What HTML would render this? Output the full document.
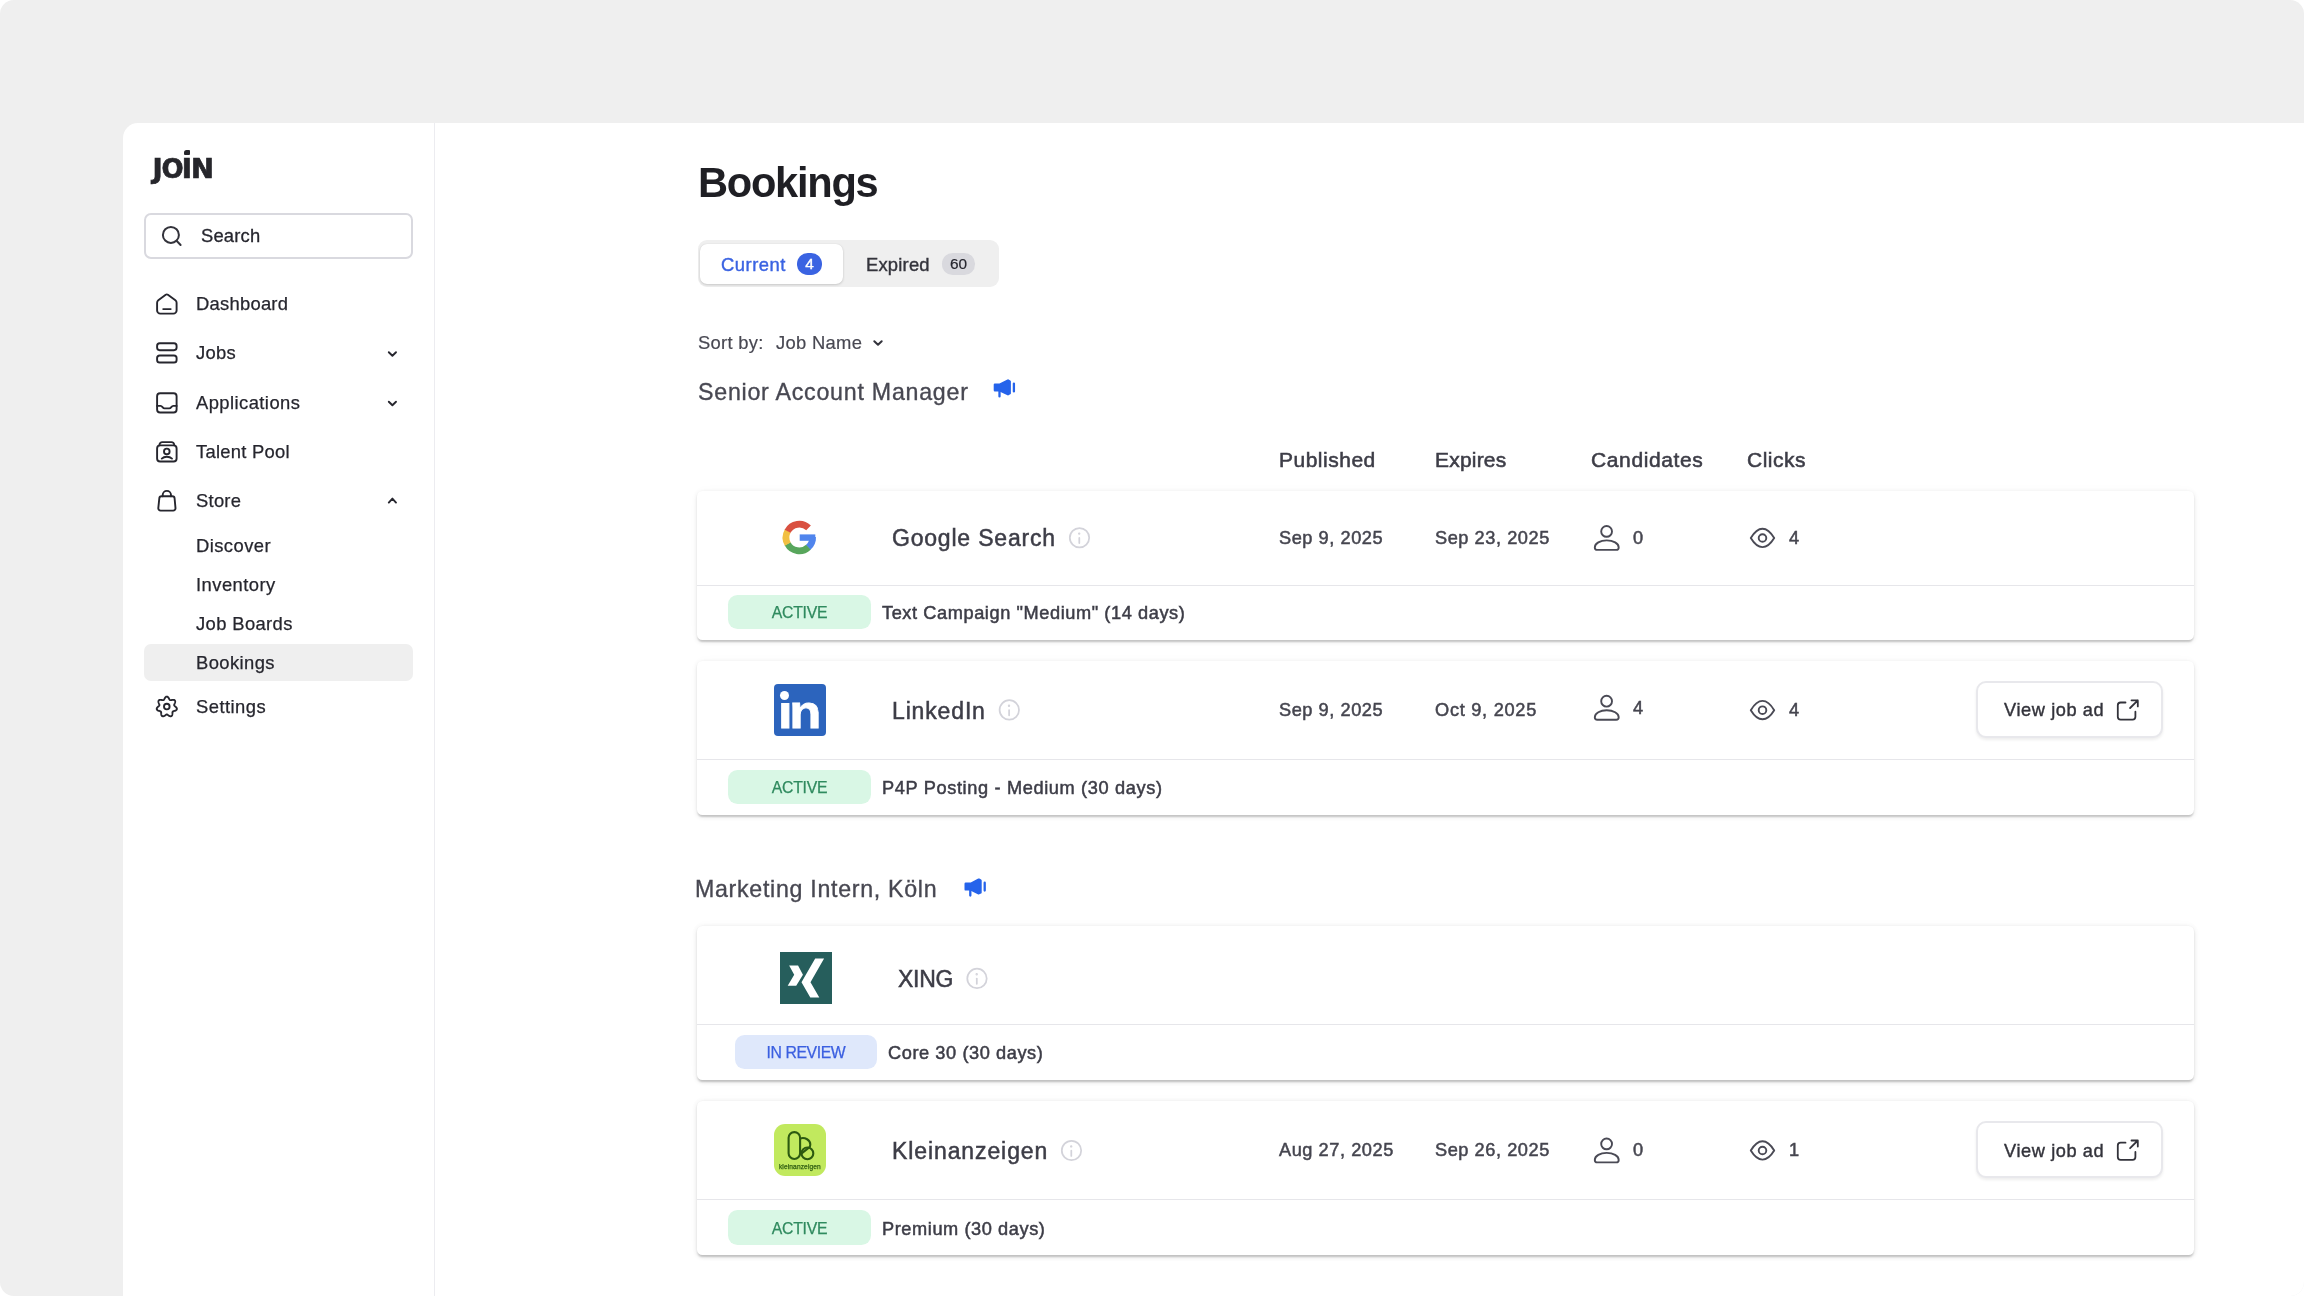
<!DOCTYPE html>
<html lang="en">
<head>
<meta charset="utf-8">
<title>Bookings</title>
<style>
*{box-sizing:border-box;margin:0;padding:0}
html,body{width:2304px;height:1296px;overflow:hidden;background:#fff}
body{font-family:"Liberation Sans",sans-serif;color:#26262e;position:relative}
#bg{position:absolute;left:0;top:0;width:2304px;height:1296px;background:#efefef;border-radius:14px;overflow:hidden}
#panel{position:absolute;left:123px;top:123px;width:2200px;height:1200px;background:#fff;border-top-left-radius:15px}
#sideline{position:absolute;left:434px;top:123px;width:1px;height:1180px;background:#ececf0}
.t{position:absolute;white-space:nowrap;height:30px;line-height:30px;margin-top:-15px;will-change:transform}
.nav{font-size:18.4px;color:#26262e;left:196px;letter-spacing:.25px;-webkit-text-stroke:.25px #26262e;margin-top:-14.7px}
.m{-webkit-text-stroke:.4px currentColor}
svg.ov{position:absolute;left:0;top:0;overflow:visible;pointer-events:none}
.ico{fill:none;stroke:#26262e;stroke-width:1.9;stroke-linecap:round;stroke-linejoin:round}
.ic2{fill:none;stroke:#4a4a55;stroke-width:1.9;stroke-linecap:round;stroke-linejoin:round}
.card{position:absolute;left:697px;width:1497px;background:#fff;border-radius:5.5px;box-shadow:0 2.6px 2px -1.3px rgba(0,0,0,.11),0 1.3px 2px 0 rgba(0,0,0,.08),0 1.3px 5px 0 rgba(0,0,0,.1),0 0 12px rgba(0,0,0,.025)}
.div{position:absolute;left:0;width:100%;height:1.3px;background:#e6e6ea}
.badge{position:absolute;height:34.4px;border-radius:9.5px}
.bg-g{background:#d9f7e5}
.bg-b{background:#dfe8fb}
.bt{font-size:15.8px;letter-spacing:-.25px;-webkit-text-stroke:.25px currentColor;padding-left:.6px}
.name{font-size:23px;color:#3d3d47;letter-spacing:.35px;-webkit-text-stroke:.5px #3d3d47}
.cell{font-size:18.2px;color:#45454f;letter-spacing:.55px;-webkit-text-stroke:.5px #45454f}
.sub{font-size:18.2px;color:#3d3d47;letter-spacing:.58px;-webkit-text-stroke:.5px #3d3d47}
.btn{position:absolute;left:1976px;width:187px;height:57px;border:2px solid #e8e8ec;border-radius:10px;background:#fff;box-shadow:0 2px 3px rgba(0,0,0,.07)}
.hd{font-size:21px;color:#3d3d47;letter-spacing:.2px;-webkit-text-stroke:.55px #3d3d47;margin-top:-15.5px}
.sec{font-size:23.2px;color:#484852;letter-spacing:.3px;-webkit-text-stroke:.35px #484852;margin-top:-14.3px}
</style>
</head>
<body>
<div id="bg">
<div id="panel"></div>
<div id="sideline"></div>

<div id="logo" class="t" style="left:150.2px;top:169.3px;font-family:'DejaVu Sans',sans-serif;font-weight:700;font-size:27.4px;letter-spacing:-.9px;color:#26262b;-webkit-text-stroke:.7px #26262b"><span style="margin-left:2.6px;margin-right:-1.4px">J</span><span style="display:inline-block;transform:scaleX(.95);margin-right:-1.2px">O</span>IN</div>
<div style="position:absolute;left:184.2px;top:149.8px;width:5.8px;height:5.5px;background:#26262b;border-radius:2.5px 1px 1px 1px"></div>
<div id="search" style="position:absolute;left:144px;top:213px;width:268.5px;height:46.4px;border:2px solid #d9d9df;border-radius:7px;background:#fff"></div>
<span class="t" style="left:201px;top:236.3px;font-size:18.4px;letter-spacing:.18px;-webkit-text-stroke:.3px #26262e">Search</span>
<span class="t nav" style="top:304px">Dashboard</span>
<span class="t nav" style="top:353px">Jobs</span>
<span class="t nav" style="top:402.5px;letter-spacing:.43px">Applications</span>
<span class="t nav" style="top:451.5px">Talent Pool</span>
<span class="t nav" style="top:500.5px">Store</span>
<span class="t nav" style="top:545.5px;letter-spacing:.43px">Discover</span>
<span class="t nav" style="top:584.5px;letter-spacing:.45px">Inventory</span>
<span class="t nav" style="top:623.5px;letter-spacing:.37px">Job Boards</span>
<div style="position:absolute;left:144px;top:644px;width:269px;height:36.5px;border-radius:7px;background:#efefef"></div>
<span class="t nav" style="top:662.5px;letter-spacing:.4px">Bookings</span>
<span class="t nav" style="top:706.5px;letter-spacing:.45px">Settings</span>

<span class="t" style="left:697.5px;top:183px;height:50px;line-height:50px;margin-top:-25px;font-size:41.6px;font-weight:700;letter-spacing:-1.25px;color:#1f1f24">Bookings</span>
<div style="position:absolute;left:698px;top:240px;width:300.5px;height:47px;border-radius:9px;background:#efefef"></div>
<div style="position:absolute;left:700px;top:244px;width:143px;height:40px;border-radius:7px;background:#fff;box-shadow:0 1px 2.5px rgba(0,0,0,.16),0 0 1px rgba(0,0,0,.1)"></div>
<span class="t m" style="left:721px;top:264.8px;font-size:18.4px;color:#3a63e2;letter-spacing:.5px">Current</span>
<div style="position:absolute;left:797.2px;top:253.1px;width:25px;height:21.6px;border-radius:10.8px;background:#3a63e2"></div>
<span class="t m" style="left:797.2px;width:25px;text-align:center;top:264.3px;font-size:15.4px;color:#fff">4</span>
<span class="t m" style="left:866.4px;top:264.9px;font-size:18.4px;color:#33333b;letter-spacing:.2px">Expired</span>
<div style="position:absolute;left:941.8px;top:253.4px;width:33.2px;height:21.2px;border-radius:10.6px;background:#d9d9de"></div>
<span class="t" style="left:941.8px;width:33.2px;text-align:center;top:264.2px;font-size:15.4px;color:#26262e;-webkit-text-stroke:.2px #26262e">60</span>
<span class="t" style="left:697.5px;top:342.6px;font-size:18.4px;color:#484852;letter-spacing:.3px;-webkit-text-stroke:.18px #484852">Sort by:</span>
<span class="t" style="left:775.5px;top:342.6px;font-size:18.4px;color:#484852;letter-spacing:.3px;-webkit-text-stroke:.18px #484852">Job Name</span>
<span class="t sec" style="left:697.5px;top:391px;letter-spacing:.76px">Senior Account Manager</span>
<span class="t sec" style="left:695px;top:888.5px;letter-spacing:.7px">Marketing Intern, Köln</span>
<span class="t hd" style="left:1279px;top:460px;letter-spacing:.5px">Published</span>
<span class="t hd" style="left:1435px;top:460px">Expires</span>
<span class="t hd" style="left:1591px;top:460px;letter-spacing:.62px">Candidates</span>
<span class="t hd" style="left:1747px;top:460px;letter-spacing:.52px">Clicks</span>
<div class="card" style="top:491.2px;height:149.09999999999997px"><div class="div" style="top:93.4px"></div></div>
<span class="t name" style="left:892px;top:538.3000000000001px;letter-spacing:0.8px">Google Search</span>
<span class="t cell m" style="left:1279px;top:537.7px">Sep 9, 2025</span>
<span class="t cell m" style="left:1435px;top:537.7px">Sep 23, 2025</span>
<span class="t cell m" style="left:1633px;top:537.7px">0</span>
<span class="t cell m" style="left:1788.5px;top:537.7px">4</span>
<div class="badge bg-g" style="left:728.3px;top:595.1px;width:142.5px"></div>
<span class="t bt" style="left:728.3px;width:142.5px;text-align:center;top:613.2px;color:#2f8a5e">ACTIVE</span>
<span class="t sub" style="left:882px;top:613.3000000000001px">Text Campaign "Medium" (14 days)</span>
<div class="card" style="top:660.6px;height:154.39999999999998px"><div class="div" style="top:98.3px"></div></div>
<span class="t name" style="left:892px;top:710.6px;letter-spacing:0.85px">LinkedIn</span>
<span class="t cell m" style="left:1279px;top:710px">Sep 9, 2025</span>
<span class="t cell m" style="left:1435px;top:710px;letter-spacing:.73px">Oct 9, 2025</span>
<span class="t cell m" style="left:1633px;top:707.5px">4</span>
<span class="t cell m" style="left:1788.5px;top:710px">4</span>
<div class="btn" style="top:681px"></div>
<span class="t m" style="left:2004px;top:710.4px;font-size:18.2px;color:#33333b;letter-spacing:.6px">View job ad</span>
<div class="badge bg-g" style="left:728.3px;top:770.1px;width:142.5px"></div>
<span class="t bt" style="left:728.3px;width:142.5px;text-align:center;top:788.2px;color:#2f8a5e">ACTIVE</span>
<span class="t sub" style="left:882px;top:788.3000000000001px;letter-spacing:.64px">P4P Posting - Medium (30 days)</span>
<div class="card" style="top:925.5px;height:154.5px"><div class="div" style="top:98.1px"></div></div>
<span class="t name" style="left:898px;top:978.8000000000001px;letter-spacing:-0.25px">XING</span>
<div class="badge bg-b" style="left:735.4px;top:1035px;width:141.2px;height:34px"></div>
<span class="t bt" style="left:735.4px;width:141.2px;text-align:center;top:1053px;color:#3b5fe0;letter-spacing:-.42px">IN REVIEW</span>
<span class="t sub" style="left:888px;top:1053.1px">Core 30 (30 days)</span>
<div class="card" style="top:1101.4px;height:153.5999999999999px"><div class="div" style="top:97.3px"></div></div>
<span class="t name" style="left:892px;top:1150.8px;letter-spacing:0.9px">Kleinanzeigen</span>
<span class="t cell m" style="left:1279px;top:1150.2px">Aug 27, 2025</span>
<span class="t cell m" style="left:1435px;top:1150.2px">Sep 26, 2025</span>
<span class="t cell m" style="left:1633px;top:1150.2px">0</span>
<span class="t cell m" style="left:1788.5px;top:1150.2px">1</span>
<div class="btn" style="top:1121.2px"></div>
<span class="t m" style="left:2004px;top:1150.6000000000001px;font-size:18.2px;color:#33333b;letter-spacing:.6px">View job ad</span>
<div class="badge bg-g" style="left:728.3px;top:1210.4px;width:142.5px"></div>
<span class="t bt" style="left:728.3px;width:142.5px;text-align:center;top:1228.5px;color:#2f8a5e">ACTIVE</span>
<span class="t sub" style="left:882px;top:1228.6px">Premium (30 days)</span>

<div style="position:absolute;left:773.8px;top:684.1px;width:51.9px;height:51.8px;border-radius:4px;background:#2c64bd;overflow:hidden"><span id="li" style="position:absolute;left:4.3px;top:1px;font-weight:700;font-size:47px;line-height:54px;letter-spacing:-3.1px;color:#fff;-webkit-text-stroke:.8px #fff;transform:scaleX(1.12);transform-origin:0 0">in</span><div style="position:absolute;left:5px;top:5px;width:13px;height:14px;background:#2c64bd"></div><div style="position:absolute;left:6.3px;top:6.7px;width:9.4px;height:9.4px;border-radius:50%;background:#fff"></div></div>
<div style="position:absolute;left:780.1px;top:952.1px;width:51.7px;height:51.7px;background:#265e5c"></div>
<div style="position:absolute;left:774.1px;top:1124.1px;width:51.8px;height:51.7px;border-radius:11px;background:#c1e95e"></div>
<span class="t" style="left:774.1px;width:51.8px;text-align:center;top:1167.2px;font-size:6.6px;font-weight:400;letter-spacing:.12px;color:#2f5d12;-webkit-text-stroke:.25px #2f5d12">kleinanzeigen</span>
<svg class="ov" width="2304" height="1296" viewBox="0 0 2304 1296">
<circle class="ico" cx="170.9" cy="234.9" r="8" style="stroke-width:2;stroke:#33333b"/><path class="ico" style="stroke-width:2;stroke:#33333b" d="M176.8 241L180.6 245"/>
<path class="ico" d="M165.7 294.8Q166.8 294 167.9 294.8L175.4 300.3A3 3 0 0 1 176.6 302.7V310.4A3.2 3.2 0 0 1 173.4 313.6H160.3A3.2 3.2 0 0 1 157.1 310.4V302.7A3 3 0 0 1 158.3 300.3Z"/><path class="ico" d="M163.2 309.1H170.7"/>
<rect class="ico" x="157.1" y="343.3" width="19.5" height="6.9" rx="2.6"/><rect class="ico" x="157.1" y="355.5" width="19.5" height="7" rx="2.6"/>
<rect class="ico" x="157.1" y="393.2" width="19.5" height="19.3" rx="3"/><path class="ico" d="M157.1 405.9H160.6C162.6 405.9 162.4 408.4 164.6 408.4H169.2C171.4 408.4 171.2 405.9 173.2 405.9H176.6"/>
<rect class="ico" x="157.1" y="445.4" width="19.5" height="16.1" rx="3"/><path class="ico" d="M159.5 445.2V444.9A2.8 2.8 0 0 1 162.3 442.1H171.4A2.8 2.8 0 0 1 174.2 444.9V445.2"/><circle class="ico" cx="166.8" cy="451.4" r="2.8"/><path class="ico" d="M161.8 458.6C163 457.4 164.7 456.8 166.8 456.8S170.7 457.4 172 458.6"/>
<path class="ico" d="M161.6 496.3H172.3A2.3 2.3 0 0 1 174.6 498.5L175.5 508.2A2.3 2.3 0 0 1 173.2 510.6H160.6A2.3 2.3 0 0 1 158.3 508.2L159.3 498.5A2.3 2.3 0 0 1 161.6 496.3Z"/><path class="ico" d="M162.7 496.3V495A4.15 4.15 0 0 1 171 495V496.3"/>
<path class="ico" d="M166.80 696.60 L167.26 696.68 L167.70 696.90 L168.11 697.24 L168.47 697.68 L168.79 698.17 L169.07 698.67 L169.32 699.14 L169.56 699.54 L169.81 699.85 L170.10 700.05 L170.43 700.15 L170.83 700.15 L171.29 700.09 L171.82 700.00 L172.38 699.90 L172.96 699.85 L173.53 699.86 L174.06 699.96 L174.51 700.17 L174.85 700.48 L175.08 700.88 L175.18 701.37 L175.16 701.90 L175.05 702.46 L174.86 703.02 L174.65 703.55 L174.44 704.03 L174.27 704.47 L174.19 704.86 L174.21 705.21 L174.34 705.53 L174.59 705.85 L174.92 706.17 L175.32 706.52 L175.75 706.90 L176.16 707.32 L176.50 707.77 L176.75 708.25 L176.87 708.73 L176.84 709.19 L176.67 709.62 L176.35 710.00 L175.92 710.32 L175.41 710.58 L174.86 710.78 L174.31 710.94 L173.80 711.08 L173.36 711.23 L173.00 711.41 L172.74 711.64 L172.57 711.94 L172.48 712.33 L172.44 712.80 L172.41 713.33 L172.38 713.90 L172.31 714.48 L172.17 715.03 L171.95 715.52 L171.65 715.91 L171.27 716.18 L170.82 716.31 L170.33 716.30 L169.81 716.17 L169.29 715.93 L168.79 715.63 L168.32 715.30 L167.89 714.98 L167.50 714.73 L167.14 714.56 L166.80 714.50 L166.46 714.56 L166.10 714.73 L165.71 714.98 L165.28 715.30 L164.81 715.63 L164.31 715.93 L163.79 716.17 L163.27 716.30 L162.78 716.31 L162.33 716.18 L161.95 715.91 L161.65 715.52 L161.43 715.03 L161.29 714.48 L161.22 713.90 L161.19 713.33 L161.16 712.80 L161.12 712.33 L161.03 711.94 L160.86 711.64 L160.60 711.41 L160.24 711.23 L159.80 711.08 L159.29 710.94 L158.74 710.78 L158.19 710.58 L157.68 710.32 L157.25 710.00 L156.93 709.62 L156.76 709.19 L156.73 708.73 L156.85 708.25 L157.10 707.77 L157.44 707.32 L157.85 706.90 L158.28 706.52 L158.68 706.17 L159.01 705.85 L159.26 705.53 L159.39 705.21 L159.41 704.86 L159.33 704.47 L159.16 704.03 L158.95 703.55 L158.74 703.02 L158.55 702.46 L158.44 701.90 L158.42 701.37 L158.52 700.88 L158.75 700.48 L159.09 700.17 L159.54 699.96 L160.07 699.86 L160.64 699.85 L161.22 699.90 L161.78 700.00 L162.31 700.09 L162.77 700.15 L163.17 700.15 L163.50 700.05 L163.79 699.85 L164.04 699.54 L164.28 699.14 L164.53 698.67 L164.81 698.17 L165.13 697.68 L165.49 697.24 L165.90 696.90 L166.34 696.68Z"/><circle class="ico" cx="166.8" cy="706.6" r="2.8"/>
<path fill="none" stroke="#26262e" stroke-width="1.9" stroke-linecap="round" stroke-linejoin="round" d="M388.79999999999995 352.25L392.4 355.75L396.0 352.25"/>
<path fill="none" stroke="#26262e" stroke-width="1.9" stroke-linecap="round" stroke-linejoin="round" d="M388.79999999999995 401.75L392.4 405.25L396.0 401.75"/>
<path fill="none" stroke="#26262e" stroke-width="1.9" stroke-linecap="round" stroke-linejoin="round" d="M388.79999999999995 502.6L392.4 498.6L396.0 502.6"/>
<path fill="none" stroke="#33333b" stroke-width="2" stroke-linecap="round" stroke-linejoin="round" d="M874.3 341.2L878 344.8L881.7 341.2"/>
<g transform="translate(0 0)" fill="#2563eb" stroke="#2563eb" stroke-linejoin="round" stroke-linecap="round"><path stroke-width="2.4" d="M994.9 384.6H1000L1008 380.5L1009.7 381.5V393.3L1008 394.2L1000 390.3H994.9Z"/><path stroke-width="2.3" fill="none" d="M999.5 391V396.4M1013.9 383.6V391.4"/></g>
<g transform="translate(-29.2 499.1)" fill="#2563eb" stroke="#2563eb" stroke-linejoin="round" stroke-linecap="round"><path stroke-width="2.4" d="M994.9 384.6H1000L1008 380.5L1009.7 381.5V393.3L1008 394.2L1000 390.3H994.9Z"/><path stroke-width="2.3" fill="none" d="M999.5 391V396.4M1013.9 383.6V391.4"/></g>
<path fill="none" stroke="#5085ed" stroke-width="6.7" d="M812.59 537.04A13.3 13.3 0 0 1 808.03 547.54"/>
<path fill="none" stroke="#58a65c" stroke-width="6.7" d="M808.37 547.23A13.3 13.3 0 0 1 787.56 543.74"/>
<path fill="none" stroke="#f1bf42" stroke-width="6.7" d="M787.78 544.15A13.3 13.3 0 0 1 787.78 530.85"/>
<path fill="none" stroke="#d95040" stroke-width="6.7" d="M787.56 531.26A13.3 13.3 0 0 1 808.54 527.93"/>
<rect x="799.6999999999999" y="534.4" width="15.6" height="6.4" fill="#5085ed"/>
<g stroke="#d3d3da" fill="none" stroke-width="1.75" stroke-linecap="round"><circle cx="1079.5" cy="537.7" r="9.7"/><path d="M1079.3 537.9000000000001V543.1"/><circle cx="1079.2" cy="533.6" r=".5" stroke-width="1.4"/></g>
<g stroke="#d3d3da" fill="none" stroke-width="1.75" stroke-linecap="round"><circle cx="1009.3" cy="709.9" r="9.7"/><path d="M1009.0999999999999 710.1V715.3"/><circle cx="1009.0" cy="705.8" r=".5" stroke-width="1.4"/></g>
<g stroke="#d3d3da" fill="none" stroke-width="1.75" stroke-linecap="round"><circle cx="977" cy="978.4" r="9.7"/><path d="M976.8 978.6V983.8"/><circle cx="976.7" cy="974.3" r=".5" stroke-width="1.4"/></g>
<g stroke="#d3d3da" fill="none" stroke-width="1.75" stroke-linecap="round"><circle cx="1071.5" cy="1150.5" r="9.7"/><path d="M1071.3 1150.7V1155.9"/><circle cx="1071.2" cy="1146.4" r=".5" stroke-width="1.4"/></g>
<g class="ic2" transform="translate(0 0)"><circle cx="1606.6" cy="531.4" r="5.4"/><path d="M1594.8 547.4C1594.8 543.4 1600.2 540.4 1606.7 540.4S1618.7 543.4 1618.7 547.4A2.5 2.5 0 0 1 1616.2 549.9H1597.3A2.5 2.5 0 0 1 1594.8 547.4Z"/></g>
<g class="ic2" transform="translate(0 0)"><path d="M1750.8 538C1754.2 532.3 1758.2 528.7 1762.5 528.7S1770.8 532.3 1774.2 538C1770.8 543.6 1766.8 547.1 1762.5 547.1S1754.2 543.6 1750.8 538Z"/><circle cx="1762.5" cy="538" r="3.8"/></g>
<g class="ic2" transform="translate(0 169.8)"><circle cx="1606.6" cy="531.4" r="5.4"/><path d="M1594.8 547.4C1594.8 543.4 1600.2 540.4 1606.7 540.4S1618.7 543.4 1618.7 547.4A2.5 2.5 0 0 1 1616.2 549.9H1597.3A2.5 2.5 0 0 1 1594.8 547.4Z"/></g>
<g class="ic2" transform="translate(0 172.2)"><path d="M1750.8 538C1754.2 532.3 1758.2 528.7 1762.5 528.7S1770.8 532.3 1774.2 538C1770.8 543.6 1766.8 547.1 1762.5 547.1S1754.2 543.6 1750.8 538Z"/><circle cx="1762.5" cy="538" r="3.8"/></g>
<g class="ic2" transform="translate(0 612.5)"><circle cx="1606.6" cy="531.4" r="5.4"/><path d="M1594.8 547.4C1594.8 543.4 1600.2 540.4 1606.7 540.4S1618.7 543.4 1618.7 547.4A2.5 2.5 0 0 1 1616.2 549.9H1597.3A2.5 2.5 0 0 1 1594.8 547.4Z"/></g>
<g class="ic2" transform="translate(0 612.5)"><path d="M1750.8 538C1754.2 532.3 1758.2 528.7 1762.5 528.7S1770.8 532.3 1774.2 538C1770.8 543.6 1766.8 547.1 1762.5 547.1S1754.2 543.6 1750.8 538Z"/><circle cx="1762.5" cy="538" r="3.8"/></g>
<g fill="none" stroke="#33333b" stroke-width="1.8" stroke-linecap="round" stroke-linejoin="round" transform="translate(0 0)"><path d="M2125.5 702.5H2120.6A2.8 2.8 0 0 0 2117.8 705.3V716.8A2.8 2.8 0 0 0 2120.6 719.6H2132.6A2.8 2.8 0 0 0 2135.4 716.8V711.7"/><path d="M2130.1 708L2137.8 700.3M2131.5 700.3H2137.8V706.4"/></g>
<g fill="none" stroke="#33333b" stroke-width="1.8" stroke-linecap="round" stroke-linejoin="round" transform="translate(0 440.2)"><path d="M2125.5 702.5H2120.6A2.8 2.8 0 0 0 2117.8 705.3V716.8A2.8 2.8 0 0 0 2120.6 719.6H2132.6A2.8 2.8 0 0 0 2135.4 716.8V711.7"/><path d="M2130.1 708L2137.8 700.3M2131.5 700.3H2137.8V706.4"/></g>
<polygon fill="#fff" points="789.15,965.6 798.07,965.6 802.95,974.7 796.2,985.8 787.7,985.8 794.2,974.7"/><polygon fill="#fff" points="815.2,958.6 824.1,958.6 810.5,982.2 819.3,997.5 810.3,997.5 801.5,982.2"/>
<g fill="none" stroke="#2c5a10" stroke-width="2.1" stroke-linecap="round"><rect x="788.6" y="1132.1" width="11.5" height="26.9" rx="5.75"/><circle cx="807.4" cy="1153.4" r="5.9"/><path d="M800.3 1138.4C805 1137 810.3 1140 810.3 1144.4C810.3 1145.8 809.8 1146.9 809.1 1147.7M801 1154L808.9 1147.6"/></g>
</svg>
</div>
</body>
</html>
